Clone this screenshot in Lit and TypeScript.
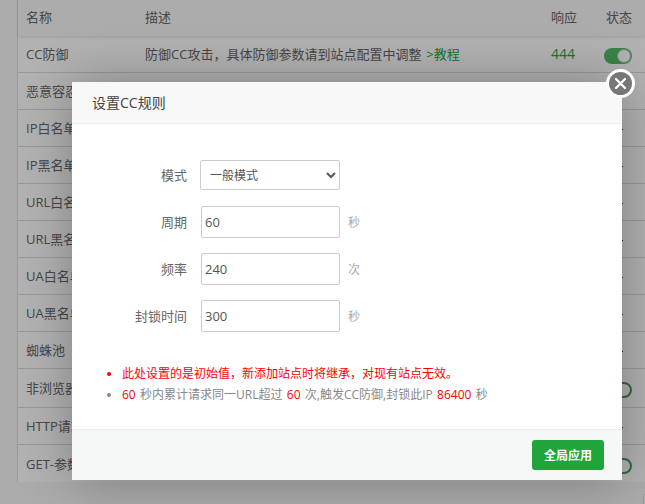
import { LitElement, html, css } from "lit";
import { customElement } from "lit/decorators.js";

interface Row { name: string; desc?: boolean; code?: string; status: "on" | "mark"; tall?: boolean }

const ROWS: Row[] = [
  { name: "CC防御", desc: true, code: "444", status: "on" },
  { name: "恶意容忍度", status: "mark" },
  { name: "IP白名单", status: "mark" },
  { name: "IP黑名单", status: "mark" },
  { name: "URL白名单", status: "mark" },
  { name: "URL黑名单", status: "mark" },
  { name: "UA白名单", status: "mark" },
  { name: "UA黑名单", status: "mark" },
  { name: "蜘蛛池", status: "mark" },
  { name: "非浏览器拦截", status: "on", tall: true },
  { name: "HTTP请求过滤", status: "mark" },
  { name: "GET-参数过滤", status: "on" },
];

@customElement("app-root")
export class AppRoot extends LitElement {
  static styles = css`
    :host {
      display: block;
      position: relative;
      width: 645px;
      height: 504px;
      overflow: hidden;
      background: #f6f6f6;
      font-family: "Open Sans", "Noto Sans CJK SC", sans-serif;
      font-size: 13px;
      color: #666;
    }
    .table {
      margin-left: 17px;
      border-left: 1px solid #ddd;
      height: 482px;
      background: #fff;
    }
    .row {
      display: grid;
      grid-template-columns: 119px 406px 55px 1fr;
      align-items: center;
      height: 37px;
      box-sizing: border-box;
      border-bottom: 1px solid #ddd;
      padding-bottom: 1px;
    }
    .row.tall { height: 39px; }
    .row.last { border-bottom: none; padding-bottom: 0; }
    .row.head {
      height: 36px;
      background: #f6f6f6;
      border-bottom: none;
      box-shadow: 0 1px 3px rgba(0, 0, 0, 0.12);
      padding-bottom: 4px;
    }
    .cell { padding-left: 8px; white-space: nowrap; overflow: hidden; }
    .desc { word-spacing: 1.5px; }
    .green { color: #20a53a; }
    .code { font-size: 14px; font-weight: 500; color: #20a53a; }
    .status { padding: 4px 0 0 6px; display: flex; align-items: center; }
    .head .status { padding: 0 0 0 8px; }
    .toggle {
      width: 28px;
      height: 16px;
      border-radius: 8px;
      background: #54bd66;
      box-sizing: border-box;
      display: flex;
      align-items: center;
      justify-content: flex-end;
      padding-right: 2px;
    }
    .knob {
      width: 12px;
      height: 12px;
      border-radius: 50%;
      background: #fff;
      box-shadow: 0 0 0 1px #bbb;
    }
    .ring {
      background: #fff;
      border: 2px solid #4a9a58;
    }
    .ring .knob { display: none; }
    .mark { width: 19px; height: 1px; background: #333; }
    .corner {
      position: absolute;
      left: 643px;
      top: 494px;
      width: 12px;
      height: 20px;
      border: 1px solid #ddd;
      border-radius: 2px;
    }
    .overlay {
      position: absolute;
      inset: 0;
      background: rgba(0, 0, 0, 0.3);
    }
    .modal {
      position: absolute;
      left: 72px;
      top: 82px;
      width: 550px;
      height: 398px;
      background: #fff;
      box-shadow: 1px 1px 50px rgba(0, 0, 0, 0.3);
      display: flex;
      flex-direction: column;
    }
    .title {
      height: 42px;
      box-sizing: border-box;
      flex: none;
      padding: 0 20px 1px;
      display: flex;
      align-items: center;
      background: #f8f8f8;
      border-bottom: 1px solid #eee;
      font-size: 14px;
      color: #444;
    }
    .close {
      position: absolute;
      left: 534px;
      top: -13px;
      width: 29px;
      height: 29px;
      box-sizing: border-box;
      border-radius: 50%;
      border: 3px solid #fff;
      background: #777;
      display: flex;
      align-items: center;
      justify-content: center;
    }
    .body { flex: 1; display: flex; flex-direction: column; padding-top: 36px; }
    .form { display: flex; flex-direction: column; gap: 15px; }
    .frow { display: flex; align-items: center; }
    .frow.first { margin-bottom: 1px; }
    .label { width: 115px; text-align: right; flex: none; color: #666; margin-right: 13px; padding-bottom: 1px; }
    select {
      width: 140px;
      height: 30px;
      box-sizing: border-box;
      border: 1px solid #ccc;
      border-radius: 2px;
      background: #fff;
      color: #555;
      font: inherit;
      font-size: 12px;
      padding-left: 5px;
      outline: none;
    }
    input {
      width: 139px;
      height: 32px;
      margin-left: 1px;
      box-sizing: border-box;
      border: 1px solid #ccc;
      border-radius: 2px;
      padding: 0 3px;
      color: #555;
      font: inherit;
      outline: none;
    }
    .unit { margin-left: 8px; font-size: 12px; color: #aaa; }
    ul {
      margin: 31px 0 0;
      padding: 0 0 0 50px;
      font-size: 12px;
      line-height: 21px;
      color: #888;
      word-spacing: 1.2px;
    }
    .warn { color: red; }
    .red { color: red; }
    .foot {
      height: 51px;
      flex: none;
      box-sizing: border-box;
      background: #f6f8f8;
      border-top: 1px solid #eee;
      display: flex;
      align-items: center;
      justify-content: flex-end;
      padding-right: 18px;
    }
    button {
      width: 72px;
      height: 30px;
      border: none;
      border-radius: 3px;
      background: #20a53a;
      color: #fff;
      font: inherit;
      font-size: 12px;
      font-weight: 700;
      padding: 0;
    }
  `;

  private renderRow(r: Row, i: number) {
    const cls = `row${r.tall ? " tall" : ""}${i === ROWS.length - 1 ? " last" : ""}`;
    return html`<div class=${cls}>
      <div class="cell">${r.name}</div>
      <div class="cell desc">
        ${r.desc
          ? html`防御CC攻击，具体防御参数请到站点配置中调整 <span class="green">&gt;教程</span>`
          : ""}
      </div>
      <div class="cell code">${r.code ?? ""}</div>
      <div class="status">
        ${r.status === "on"
          ? html`<div class="toggle ${r.desc ? "" : "ring"}"><div class="knob"></div></div>`
          : html`<div class="mark"></div>`}
      </div>
    </div>`;
  }

  private field(label: string, value: string, unit: string) {
    return html`<div class="frow">
      <div class="label">${label}</div>
      <input .value=${value} />
      <span class="unit">${unit}</span>
    </div>`;
  }

  render() {
    return html`
      <div class="table">
        <div class="row head">
          <div class="cell">名称</div>
          <div class="cell">描述</div>
          <div class="cell">响应</div>
          <div class="status">状态</div>
        </div>
        ${ROWS.map((r, i) => this.renderRow(r, i))}
      </div>
      <div class="corner"></div>
      <div class="overlay"></div>
      <div class="modal">
        <div class="title">设置CC规则</div>
        <div class="close">
          <svg width="13" height="13" viewBox="0 0 13 13">
            <path d="M2 2 L11 11 M11 2 L2 11" stroke="#fff" stroke-width="2.2" stroke-linecap="round" fill="none" />
          </svg>
        </div>
        <div class="body">
          <div class="form">
            <div class="frow first">
              <div class="label">模式</div>
              <select><option>一般模式</option></select>
            </div>
            ${this.field("周期", "60", "秒")}
            ${this.field("频率", "240", "次")}
            ${this.field("封锁时间", "300", "秒")}
          </div>
          <ul>
            <li class="warn">此处设置的是初始值，新添加站点时将继承，对现有站点无效。</li>
            <li><span class="red">60</span> 秒内累计请求同一URL超过 <span class="red">60</span> 次,触发CC防御,封锁此IP <span class="red">86400</span> 秒</li>
          </ul>
        </div>
        <div class="foot"><button>全局应用</button></div>
      </div>
    `;
  }
}
